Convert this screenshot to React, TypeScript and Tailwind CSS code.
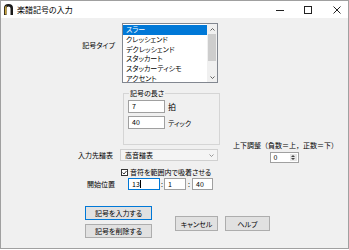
import React from "react";

const jp = "font-['Noto_Sans_CJK_JP',sans-serif] [font-feature-settings:'palt']";

const items = ["スラー", "クレッシェンド", "デクレッシェンド", "スタッカート", "スタッカーティシモ", "アクセント"];

function Btn({ label, primary, className }: { label: string; primary?: boolean; className?: string }) {
  return (
    <div
      className={`flex items-center justify-center bg-[#e1e1e1] border text-[7px] leading-[10px] text-black ${
        primary ? "border-[#0078d7]" : "border-[#adadad]"
      } ${className ?? ""}`}
    >
      {label}
    </div>
  );
}

export default function App() {
  return (
    <div className={`w-[349px] h-[249px] bg-[#f0f0f0] border border-[#a0a0a0] overflow-hidden flex flex-col text-black ${jp}`}>
      {/* title bar */}
      <div className="h-[17px] bg-white flex items-center shrink-0">
        <svg width="9" height="11" viewBox="0 0 9 11" className="ml-[3px]">
          <path d="M0 11 V4 Q0 0 4.5 0 Q9 0 9 4 V11 H6.5 V4.5 Q6.5 2.5 4.5 2.5 Q2.5 2.5 2.5 4.5 V11 Z" fill="#1a1a1a" />
          <path d="M0.8 10.5 V4.5 Q0.8 2 2.5 1.2 L2.5 10.5 Z" fill="#c9a43a" />
        </svg>
        <span className="ml-[4px] text-[8px] leading-[10px]">楽譜記号の入力</span>
        <div className="ml-auto flex items-center">
          <svg width="8" height="8" viewBox="0 0 8 8">
            <path d="M0 4.5 H8" stroke="#222" strokeWidth="1" />
          </svg>
          <svg width="8" height="8" viewBox="0 0 8 8" className="ml-[20px]">
            <rect x="0.5" y="0.5" width="7" height="7" fill="none" stroke="#222" strokeWidth="1" />
          </svg>
          <svg width="8" height="8" viewBox="0 0 8 8" className="ml-[21px] mr-[7px]">
            <path d="M0.5 0.5 L7.5 7.5 M7.5 0.5 L0.5 7.5" stroke="#222" strokeWidth="1" />
          </svg>
        </div>
      </div>

      {/* main */}
      <div className="flex">
        <div className="w-[222px] flex flex-col">
          {/* symbol type */}
          <div className="flex mt-[5px]">
            <div className="w-[114px] text-right pt-[17px] text-[7px] leading-[10px]">記号タイプ</div>
            <div className="ml-[7px] w-[96px] h-[60px] border border-[#828790] bg-white flex overflow-hidden">
              <div className="flex-1 pt-[1px]">
                {items.map((it, i) => (
                  <div
                    key={it}
                    className={`h-[9.8px] leading-[9.8px] pl-[3px] text-[7px] whitespace-nowrap ${
                      i === 0 ? "bg-[#0078d7] text-white" : ""
                    }`}
                  >
                    {it}
                  </div>
                ))}
              </div>
              <div className="w-[10px] bg-[#f0f0f0] flex flex-col">
                <div className="h-[10px] flex items-center justify-center">
                  <svg width="5" height="3" viewBox="0 0 5 3">
                    <path d="M0.5 2.5 L2.5 0.5 L4.5 2.5" fill="none" stroke="#606060" strokeWidth="1" />
                  </svg>
                </div>
                <div className="flex-1 px-[1px]">
                  <div className="h-[27px] bg-[#cdcdcd]" />
                </div>
                <div className="h-[10px] flex items-center justify-center">
                  <svg width="5" height="3" viewBox="0 0 5 3">
                    <path d="M0.5 0.5 L2.5 2.5 L4.5 0.5" fill="none" stroke="#606060" strokeWidth="1" />
                  </svg>
                </div>
              </div>
            </div>
          </div>

          {/* length group */}
          <fieldset className="ml-[122px] w-[97px] mt-[5px] border border-[#d5d5d5] pl-[4px] pb-[15px]">
            <legend className="ml-[1px] px-[1px] text-[7px] leading-[10px]">記号の長さ</legend>
            <div className="flex items-center mt-[2px]">
              <div className="w-[37px] h-[13px] border border-[#a0a0a0] bg-white text-[7px] leading-[11px] pl-[3px]">7</div>
              <span className="ml-[3px] text-[8px] leading-[10px]">拍</span>
            </div>
            <div className="flex items-center mt-[3px]">
              <div className="w-[37px] h-[13px] border border-[#a0a0a0] bg-white text-[7px] leading-[11px] pl-[3px]">40</div>
              <span className="ml-[3px] text-[7px] leading-[10px]">ティック</span>
            </div>
          </fieldset>

          {/* staff select */}
          <div className="flex items-center mt-[4px] h-[12px]">
            <div className="w-[112px] text-right text-[7px] leading-[10px]">入力先譜表</div>
            <div className="ml-[7px] w-[98px] h-[12px] border border-[#d0d0d0] bg-[#f4f4f4] flex items-center">
              <span className="pl-[4px] text-[7px] leading-[10px]">高音譜表</span>
              <svg width="5" height="3" viewBox="0 0 5 3" className="ml-auto mr-[3px]">
                <path d="M0.5 0.5 L2.5 2.5 L4.5 0.5" fill="none" stroke="#808080" strokeWidth="0.8" />
              </svg>
            </div>
          </div>

          {/* snap checkbox */}
          <div className="flex items-center mt-[6px] h-[10px] pl-[120px]">
            <div className="w-[7px] h-[7px] border border-[#333] bg-white flex items-center justify-center">
              <svg width="5" height="5" viewBox="0 0 5 5">
                <path d="M0.5 2.6 L2 4 L4.5 1" fill="none" stroke="#222" strokeWidth="0.9" />
              </svg>
            </div>
            <span className="ml-[2px] text-[7px] leading-[10px]">音符を範囲内で吸着させる</span>
          </div>

          {/* start position */}
          <div className="flex items-center mt-[1px] h-[12px]">
            <div className="w-[114px] text-right text-[7px] leading-[10px]">開始位置</div>
            <div className="ml-[13px] w-[32px] h-[12px] border border-[#0078d7] bg-white flex items-center pl-[3px]">
              <span className="text-[7px] leading-[10px]">13</span>
              <span className="w-[1px] h-[8px] bg-black" />
            </div>
            <span className="w-[4px] text-center text-[7px] leading-[10px]">:</span>
            <div className="w-[22px] h-[12px] border border-[#a0a0a0] bg-white text-[7px] leading-[10px] pl-[3px]">1</div>
            <span className="w-[6px] text-center text-[7px] leading-[10px]">:</span>
            <div className="w-[21px] h-[12px] border border-[#a0a0a0] bg-white text-[7px] leading-[10px] pl-[3px]">40</div>
          </div>
        </div>

        {/* vertical adjust */}
        <div className="flex-1 flex flex-col items-center pt-[122px]">
          <div className="text-[7px] leading-[10px] whitespace-nowrap [font-feature-settings:normal]">上下調整（負数＝上，正数＝下）</div>
          <div className="mt-[2px] mr-[3px] w-[29px] h-[11px] border border-[#a0a0a0] bg-white flex">
            <span className="flex-1 pl-[3px] text-[7px] leading-[9px]">0</span>
            <div className="w-[7px] my-[1px] mr-[1px] bg-[#e6e6e6] flex flex-col items-center justify-center gap-[1px]">
              <svg width="4" height="2" viewBox="0 0 4 2">
                <path d="M0 2 L2 0 L4 2 Z" fill="#444" />
              </svg>
              <svg width="4" height="2" viewBox="0 0 4 2">
                <path d="M0 0 L2 2 L4 0 Z" fill="#444" />
              </svg>
            </div>
          </div>
        </div>
      </div>

      {/* buttons */}
      <div className="flex mt-[16px]">
        <div className="ml-[84px] w-[67px] flex flex-col gap-[4px]">
          <Btn label="記号を入力する" primary className="h-[14px]" />
          <Btn label="記号を削除する" className="h-[14px]" />
        </div>
        <Btn label="キャンセル" className="ml-[23px] mt-[10px] w-[43px] h-[15px]" />
        <Btn label="ヘルプ" className="ml-[7px] mt-[10px] w-[45px] h-[15px]" />
      </div>
    </div>
  );
}
